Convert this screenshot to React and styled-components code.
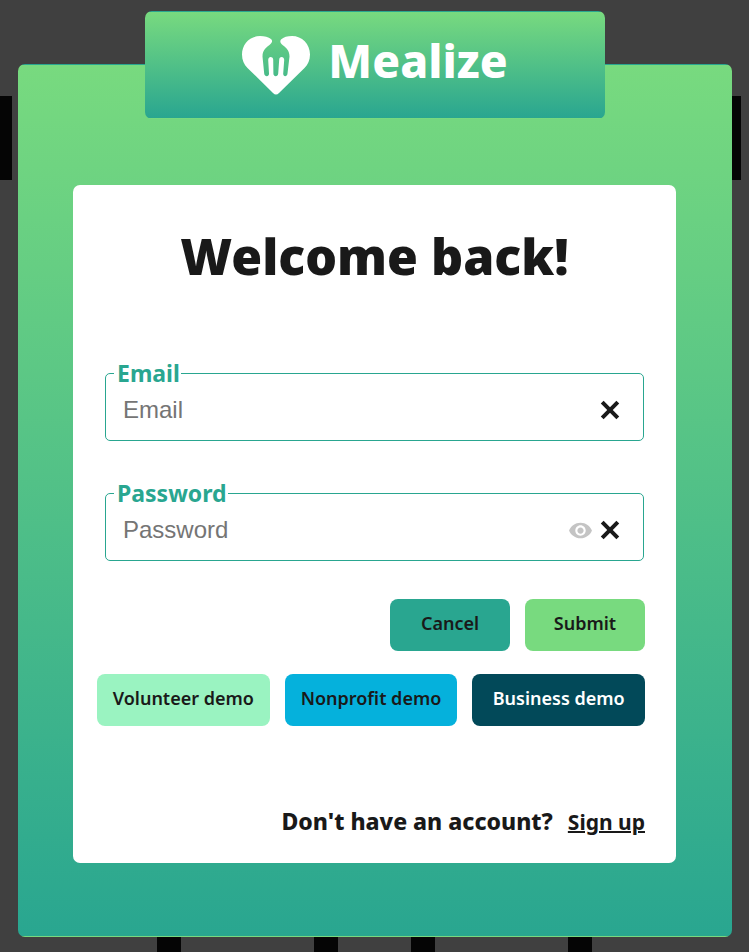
import React, { useState } from 'react';
import styled, { createGlobalStyle } from 'styled-components';
import { MdVisibility } from 'react-icons/md';

const ink = '#191919';
const teal = '#29a690';
const lime = '#78da7f';
const bar = '#050505';

const GlobalStyle = createGlobalStyle`
  *, *::before, *::after { box-sizing: border-box; }
  body {
    margin: 0;
    background: #404040;
    color: ${ink};
    font-family: 'Noto Sans', 'Open Sans', sans-serif;
  }
`;

const Page = styled.div`
  display: flex;
  flex-direction: column;
  min-height: 100vh;
  padding: 11px 17px 15px 18px;
  background-image:
    linear-gradient(${bar}, ${bar}),
    linear-gradient(${bar}, ${bar}),
    linear-gradient(${bar}, ${bar}),
    linear-gradient(${bar}, ${bar}),
    linear-gradient(${bar}, ${bar}),
    linear-gradient(${bar}, ${bar});
  background-repeat: no-repeat;
  background-size: 12px 84px, 24px 84px, 24px 48px, 24px 48px, 24px 48px, 24px 48px;
  background-position: 0 96px, 717px 96px, 157px 100%, 314px 100%, 411px 100%, 568px 100%;
`;

const Banner = styled.header`
  display: flex;
  align-items: center;
  justify-content: center;
  gap: 18px;
  height: 108px;
  margin: 0 17.8% -55px;
  padding-bottom: 10px;
  z-index: 1;
  border: 1px solid transparent;
  border-radius: 7px;
  background-image: linear-gradient(${lime}, ${teal});
  color: #fff;
`;

const Logo = styled.svg`
  width: 68px;
  height: 59px;
  margin-top: 10px;
`;

const Brand = styled.span`
  font-size: 46px;
  line-height: 56px;
  font-weight: 800;
`;

const Frame = styled.main`
  flex: 1;
  display: flex;
  flex-direction: column;
  padding: 120px 55px 73px 54px;
  border: 1px solid transparent;
  border-radius: 7px;
  background-image: linear-gradient(${lime}, ${teal});
`;

const Card = styled.section`
  flex: 1;
  display: flex;
  flex-direction: column;
  padding: 35px 32px 25px;
  border-radius: 7px;
  background: #fff;
`;

const Title = styled.h1`
  margin: 0 0 65px;
  text-align: center;
  font-size: 50px;
  line-height: 72px;
  font-weight: 900;
`;

const Form = styled.form`
  display: flex;
  flex-direction: column;
`;

const Field = styled.fieldset`
  display: flex;
  align-items: center;
  gap: 7px;
  min-width: 0;
  height: 84px;
  margin: 0 0 36px;
  padding: 5px 23px 0 17px;
  border: 1px solid ${teal};
  border-radius: 5px;
`;

const Legend = styled.legend`
  margin-left: -9px;
  padding: 0 1px 0 3px;
  color: ${teal};
  font-size: 23px;
  line-height: 32px;
  font-weight: 700;
`;

const Input = styled.input`
  flex: 1;
  min-width: 0;
  padding: 0;
  border: 0;
  outline: 0;
  background: none;
  color: ${ink};
  font: 24px/32px 'Liberation Sans', Arial, sans-serif;
  &::placeholder { color: #757575; }
`;

const IconButton = styled.button`
  display: flex;
  padding: 0;
  border: 0;
  background: none;
  color: ${(p) => (p.$muted ? '#c4c4c4' : ink)};
  cursor: pointer;
`;

const Actions = styled.div`
  display: flex;
  justify-content: flex-end;
  gap: 15px;
  margin: 2px -1px 0 -8px;
`;

const Demos = styled(Actions)`
  margin-top: 23px;
`;

const Button = styled.button`
  flex: ${(p) => (p.$wide ? '1 1 0' : '0 0 120px')};
  height: 52px;
  padding: 0 0 4px;
  border: 0;
  border-radius: 8px;
  background: ${(p) => p.$bg};
  color: ${(p) => p.$fg || ink};
  font: 600 18px/24px 'Noto Sans', 'Open Sans', sans-serif;
  white-space: nowrap;
  cursor: pointer;
`;

const Footer = styled.footer`
  display: flex;
  align-items: baseline;
  justify-content: flex-end;
  gap: 15px;
  margin: auto -1px 0 0;
  font-size: 23px;
  line-height: 32px;
  font-weight: 800;
`;

const SignUp = styled.a`
  color: ${ink};
  font-size: 21px;
  font-weight: 700;
  text-decoration-thickness: 2px;
`;

function LogoMark() {
  return (
    <Logo viewBox="0 0 68 59" fill="currentColor" aria-hidden="true">
      <path d="M18 0C8 0 0 8 0 18.500C0 24 2 28.500 5.500 32L31 57Q34 60 37 57L62.500 32C66 28.500 68 24 68 18.500C68 8 60 0 50 0C45.500 0 41.500 1 39 3.500C37.800 4.800 38.200 6.800 39.500 8C43 11.200 47.500 13.500 47.500 20.500L45.500 37.500C45.200 41 41 41.200 41.200 37.500L42.200 24C42.200 20.200 37.500 20.200 37.200 23.500L36.200 37.500C36 41 31.400 41 31.400 37.500L31.200 23.500C30.700 20.200 26.200 20.200 26.200 24L27 37.500C27.200 41.200 22.500 41 22.200 37.500L20.500 20.500C20.500 13.500 25 11.200 28.500 8C30.500 6.300 30.500 4 29 3C26.500 1 22.500 0 18 0Z" />
    </Logo>
  );
}

function CrossIcon() {
  return (
    <svg width="20" height="20" viewBox="0 0 20 20" aria-hidden="true">
      <path d="M2.200 2.200L17.800 17.800M17.800 2.200L2.200 17.800" stroke="currentColor" strokeWidth="4" />
    </svg>
  );
}

function TextField({ id, label, type, canReveal }) {
  const [value, setValue] = useState('');
  const [shown, setShown] = useState(false);
  return (
    <Field>
      <Legend>
        <label htmlFor={id}>{label}</label>
      </Legend>
      <Input
        id={id}
        type={shown ? 'text' : type}
        placeholder={label}
        value={value}
        onChange={(e) => setValue(e.target.value)}
      />
      {canReveal && (
        <IconButton type="button" $muted aria-label="Show password" onClick={() => setShown(!shown)}>
          <MdVisibility size={25} />
        </IconButton>
      )}
      <IconButton type="button" aria-label={`Clear ${label}`} onClick={() => setValue('')}>
        <CrossIcon />
      </IconButton>
    </Field>
  );
}

export default function App() {
  return (
    <>
      <GlobalStyle />
      <Page>
        <Banner>
          <LogoMark />
          <Brand>Mealize</Brand>
        </Banner>
        <Frame>
          <Card>
            <Title>Welcome back!</Title>
            <Form onSubmit={(e) => e.preventDefault()}>
              <TextField id="email" label="Email" type="email" />
              <TextField id="password" label="Password" type="password" canReveal />
              <Actions>
                <Button type="button" $bg={teal}>Cancel</Button>
                <Button type="submit" $bg={lime}>Submit</Button>
              </Actions>
              <Demos>
                <Button type="button" $wide $bg="#9af3c1">Volunteer demo</Button>
                <Button type="button" $wide $bg="#05b1dc">Nonprofit demo</Button>
                <Button type="button" $wide $bg="#024959" $fg="#fff">Business demo</Button>
              </Demos>
            </Form>
            <Footer>
              <span>Don't have an account?</span>
              <SignUp href="#signup">Sign up</SignUp>
            </Footer>
          </Card>
        </Frame>
      </Page>
    </>
  );
}
